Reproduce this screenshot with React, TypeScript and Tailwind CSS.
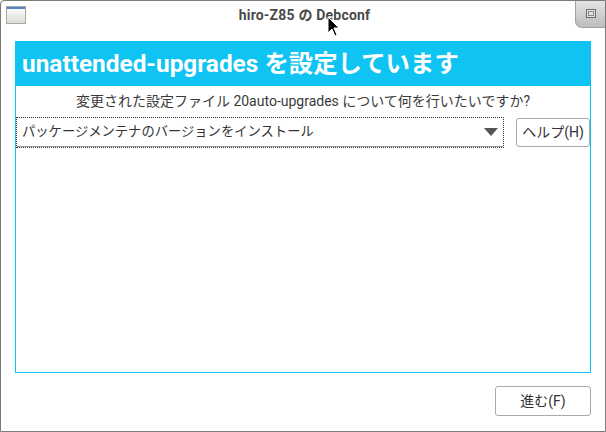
import React from "react";

export default function App() {
  const font = { fontFamily: 'Roboto, "Noto Sans CJK JP", sans-serif' };
  return (
    <div
      className="relative w-[606px] h-[432px] bg-white border border-[#7a7a7a] rounded-tl-[4px] flex flex-col overflow-hidden"
      style={font}
    >
      {/* title bar */}
      <div className="relative h-[28px] flex items-center justify-center shrink-0">
        <div className="absolute left-[5px] top-[5px] w-[20px] h-[18px] border border-[#a8a8a8] bg-gradient-to-b from-[#ffffff] to-[#dcdcd6] flex flex-col">
          <div className="h-[2px] bg-[#5b82c4]" />
        </div>
        <div className="text-[14px] font-bold text-[#4a4a4a] tracking-[0.2px] ml-[3px]">hiro-Z85 の Debconf</div>
        <div className="absolute right-0 top-[-1px] w-[30px] h-[28px] rounded-bl-[7px] border-l border-b border-[#a0a0a0] bg-gradient-to-b from-[#e6e6e6] to-[#bdbdbd] flex items-center justify-center">
          <div className="w-[10px] h-[9px] border border-[#6e6e6e] bg-[#e0e0e0] flex items-center justify-center">
            <div className="w-[6px] h-[5px] border border-[#8a8a8a]" />
          </div>
        </div>
      </div>

      {/* body */}
      <div className="flex-1 flex flex-col px-[14px] pt-[12px] pb-[15px]">
        <div className="h-[332px] border border-[#0fc3f2] flex flex-col">
          <div className="h-[44px] bg-[#0fc3f2] flex items-center pl-[6px] pt-[1px]">
            <span className="text-[24.4px] font-bold text-white leading-none">unattended-upgrades を設定しています</span>
          </div>
          <div className="h-[30px] flex items-center justify-center text-[14px] text-[#3a3a3a]">
            変更された設定ファイル 20auto-upgrades について何を行いたいですか?
          </div>
          <div className="flex items-center gap-[12px] mt-[1px]">
            <div className="w-[488px] h-[31px] border border-dotted border-[#333] flex flex-col">
              <div className="flex-1 flex items-center justify-between pl-[5px] pr-[5px] border-b border-[#9a9a9a]">
                <span className="text-[13.3px] text-[#333]">パッケージメンテナのバージョンをインストール</span>
                <svg width="14" height="8" viewBox="0 0 14 8">
                  <polygon points="0,0 14,0 7,8" fill="#555" />
                </svg>
              </div>
            </div>
            <button className="w-[74px] h-[29px] border border-[#aaaaaa] rounded-[3px] bg-white text-[14px] text-[#333] flex items-center justify-center">
              ヘルプ(H)
            </button>
          </div>
        </div>
        <div className="flex justify-end mt-[13px]">
          <button className="w-[96px] h-[30px] border border-[#aaaaaa] rounded-[3px] bg-white text-[14px] text-[#333] flex items-center justify-center">
            進む(F)
          </button>
        </div>
      </div>

      {/* mouse cursor */}
      <svg className="absolute left-[326px] top-[15px]" width="14" height="22" viewBox="0 0 14 22">
        <path d="M1,1 L1,17 L5,13 L8,20 L10,19 L7,12 L12,12 Z" fill="#000" stroke="#fff" strokeWidth="1" />
      </svg>
    </div>
  );
}
